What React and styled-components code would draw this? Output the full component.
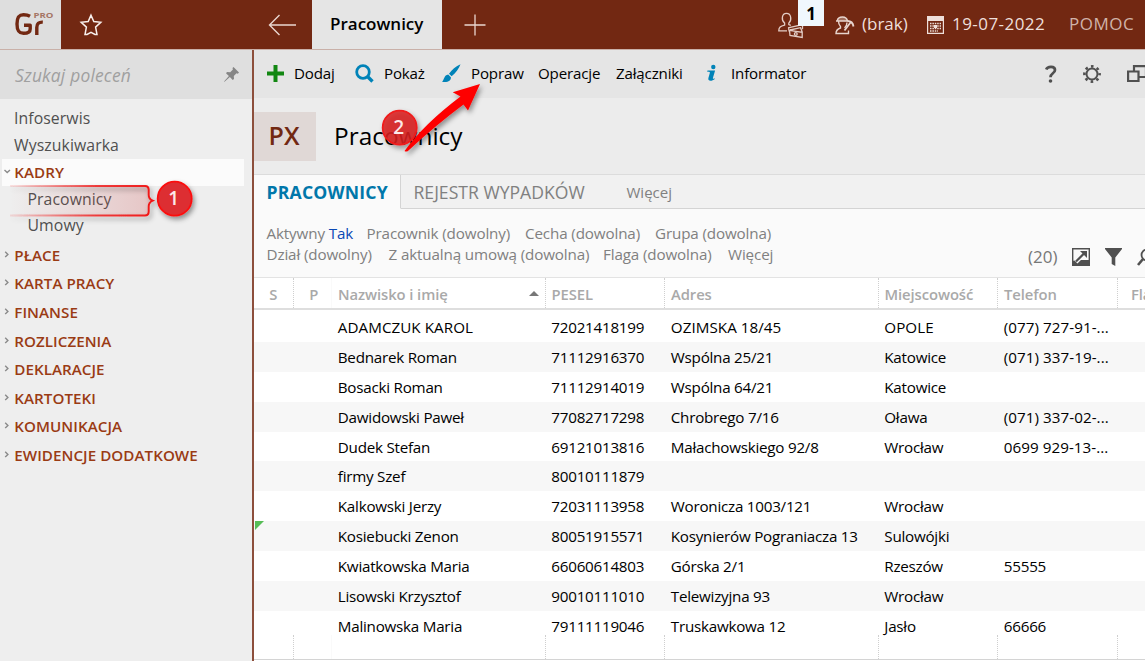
import React from "react";
import styled, { createGlobalStyle, css } from "styled-components";

const Global = createGlobalStyle`
  * { box-sizing: border-box; }
  html, body { margin: 0; padding: 0; overflow: hidden; }
  body { font-family: "Open Sans", "Noto Sans", sans-serif; font-size: 15px; color: #000; background: #fff; }
`;

const Screen = styled.div`
  position: relative;
  width: 1145px;
  height: 661px;
  overflow: hidden;
  display: flex;
  flex-direction: column;
  white-space: nowrap;
`;

/* Title bar */
const TopBar = styled.header`
  flex: none;
  height: 50px;
  display: flex;
  background: #722812;
  border-bottom: 1px solid #c9b0a8;
`;
const Brand = styled.div`
  flex: none;
  width: 61px;
  background: #dedede;
`;
const TopButton = styled.div`
  flex: none;
  width: ${(p) => p.$w}px;
  height: 49px;
  display: flex;
  align-items: center;
  justify-content: center;
`;
const Gap = styled.div`
  flex: none;
  width: ${(p) => p.$w}px;
`;
const OpenTab = styled.div`
  flex: none;
  width: 130px;
  background: #e5e5e5;
  font-size: 17px;
  font-weight: 600;
  line-height: 47px;
  padding-left: 18px;
`;
const Status = styled.div`
  flex: none;
  position: relative;
  display: flex;
  align-items: center;
  width: ${(p) => p.$w}px;
  height: 49px;
`;
const StatusText = styled.span`
  font-size: 17px;
  line-height: 47px;
  height: 49px;
  color: ${(p) => p.$color || "#eedfda"};
  letter-spacing: ${(p) => p.$ls || 0}px;
  margin-left: ${(p) => p.$ml || 0}px;
`;
const Counter = styled.div`
  position: absolute;
  left: 20px;
  top: 0;
  width: 26px;
  height: 26px;
  background: #f0f7fd;
  color: #000;
  font-size: 17px;
  font-weight: 700;
  line-height: 27px;
  text-align: center;
`;

const Body = styled.div`
  flex: 1;
  min-height: 0;
  display: flex;
`;

/* Side menu */
const Sidebar = styled.aside`
  flex: none;
  width: 254px;
  background: #eee;
  border-right: 2px solid #8d4f3c;
`;
const Search = styled.div`
  height: 49px;
  background: #dfdfdf;
  display: flex;
  align-items: center;
  justify-content: space-between;
  padding: 0 12px 0 15px;
  font-size: 17.4px;
  font-style: italic;
  color: #a0a0a0;
  letter-spacing: 0.2px;
`;
const Menu = styled.nav`
  padding-top: 5.5px;
`;
const MenuLink = styled.div`
  height: ${(p) => (p.$sub ? 26.5 : 27)}px;
  line-height: ${(p) => (p.$sub ? 26.5 : 27)}px;
  padding-left: ${(p) => (p.$sub ? 27.5 : 14)}px;
  font-size: 15.8px;
  color: #505050;
  letter-spacing: 0.08px;
`;
const Group = styled.div`
  display: flex;
  align-items: center;
  height: ${(p) => (p.$open ? 27 : 28.6)}px;
  font-size: 15.2px;
  font-weight: 600;
  color: #9a3b14;
  letter-spacing: 0.03px;
  padding-left: 4px;
  ${(p) =>
    p.$open &&
    css`
      background: #fbfbfb;
      margin: 0 8px 0 2px;
      padding-left: 2px;
    `}
  svg { width: 7px; margin-right: 3.3px; }
`;
const Groups = styled.div`
  padding-top: 2px;
`;

/* Work area */
const Main = styled.main`
  flex: 1;
  min-width: 0;
  display: flex;
  flex-direction: column;
  background: #ececec;
`;
const Toolbar = styled.div`
  flex: none;
  height: 48px;
  background: #e5e5e5;
  display: flex;
  align-items: center;
  overflow: hidden;
`;
const Tool = styled.div`
  flex: none;
  width: ${(p) => p.$w}px;
  height: 48px;
  padding-bottom: 2px;
  display: flex;
  align-items: center;
  font-size: 15.1px;
  letter-spacing: -0.16px;
  > svg { position: relative; top: 1px; }
`;
const ToolIcon = styled.span`
  display: flex;
  width: ${(p) => p.$w}px;
  justify-content: flex-start;
`;
const Heading = styled.div`
  flex: none;
  height: 76px;
  padding-top: 14px;
  display: flex;
`;
const Code = styled.div`
  width: 62px;
  height: 49px;
  background: #e0d8d6;
  color: #722812;
  font-size: 25px;
  font-weight: 600;
  line-height: 47px;
  padding-right: 2px;
  text-align: center;
`;
const Title = styled.h1`
  margin: 0 0 0 18px;
  font-size: 24.4px;
  font-weight: 400;
  line-height: 47px;
`;
const Tabs = styled.div`
  flex: none;
  height: 35px;
  display: flex;
  background: #f1f1f1;
  border-top: 1px solid #dcdcdc;
`;
const Tab = styled.div`
  width: ${(p) => p.$w}px;
  padding-left: 12.5px;
  line-height: 35px;
  font-size: ${(p) => p.$size || 17.6}px;
  color: #808080;
  border-bottom: 1px solid #d4d4d4;
  ${(p) =>
    p.$active &&
    css`
      background: #fafafa;
      border-bottom-color: #fafafa;
      border-right: 1px solid #d4d4d4;
      color: #0077aa;
      font-weight: 700;
      letter-spacing: 0.2px;
    `}
`;
const Filters = styled.div`
  flex: none;
  height: 69px;
  background: #fafafa;
  display: flex;
  border-bottom: 1px solid #e3e3e3;
`;
const FilterLines = styled.div`
  flex: none;
  width: 774px;
  padding: 13.5px 0 0 12.5px;
`;
const FilterLine = styled.div`
  height: 21.5px;
  line-height: 21.5px;
  display: flex;
  font-size: 15.2px;
  letter-spacing: -0.13px;
  color: #808080;
`;
const Filter = styled.span`
  width: ${(p) => p.$w}px;
  b { font-weight: 400; color: #0a48b4; }
`;
const FilterTools = styled.div`
  flex: 1;
  min-width: 0;
  overflow: hidden;
  display: flex;
  align-items: center;
  padding-top: 27px;
  font-size: 17px;
  color: #777;
  svg { flex: none; }
`;

const columns = "39.5px 38.5px 213.5px 119.5px 213.5px 119.5px 120px 60px";
const Grid = styled.div`
  flex: 1;
  min-height: 0;
  background: #fff;
  display: flex;
  flex-direction: column;
`;
const HeadRow = styled.div`
  flex: none;
  display: grid;
  grid-template-columns: ${columns};
  height: 32px;
  border-bottom: 2px solid #dedede;
`;
const HeadCell = styled.div`
  display: flex;
  align-items: center;
  justify-content: ${(p) => (p.$center ? "center" : "space-between")};
  padding: 1px 6px 0 ${(p) => p.$pad || 6}px;
  border-right: 1px ${(p) => (p.$faint ? "solid #fafafa" : "dotted #cfcfcf")};
  font-size: 14.8px;
  font-weight: 600;
  color: #a9a9a9;
  letter-spacing: -0.08px;
`;
const Rows = styled.div`
  padding-top: 2px;
`;
const Row = styled.div`
  position: relative;
  display: grid;
  grid-template-columns: ${columns};
  height: 29.9px;
  line-height: 30px;
  background: ${(p) => (p.$alt ? "#f7f7f7" : "#fff")};
`;
const spacing = { caps: 0.05, phone: 0.05, text: -0.24 };
const Cell = styled.div`
  padding-left: 5.8px;
  font-size: 15.2px;
  letter-spacing: ${(p) => spacing[p.$kind || "text"]}px;
`;
const Flag = styled.div`
  position: absolute;
  left: 1px;
  top: 0;
  border-top: 9px solid #57bd57;
  border-right: 9px solid transparent;
`;
const EmptyRow = styled.div`
  flex: none;
  display: grid;
  grid-template-columns: ${columns};
  height: 25px;
  margin-top: -6px;
  position: relative;
  border-bottom: 1px solid #d4d4d4;
`;
const EmptyCell = styled.div`
  border-right: 1px ${(p) => (p.$faint ? "solid #fafafa" : "dotted #cfcfcf")};
`;

/* Tutorial markers over the window */
const Markers = styled.svg`
  position: absolute;
  left: 0;
  top: 0;
  pointer-events: none;
`;

const Chevron = ({ open }) => (
  <svg width="7" height="8" viewBox="0 0 7 8" fill="none" stroke="#8a8a8a" strokeWidth="1.4">
    <path d={open ? "M.5 2l2.700 2.600L6 2" : "M1.200 .8L3.900 3.400 1.200 6"} />
  </svg>
);

const groups = ["PŁACE", "KARTA PRACY", "FINANSE", "ROZLICZENIA", "DEKLARACJE", "KARTOTEKI", "KOMUNIKACJA", "EWIDENCJE DODATKOWE"];

const people = [
  ["ADAMCZUK KAROL", "72021418199", "OZIMSKA 18/45", "OPOLE", "(077) 727-91-..."],
  ["Bednarek Roman", "71112916370", "Wspólna 25/21", "Katowice", "(071) 337-19-..."],
  ["Bosacki Roman", "71112914019", "Wspólna 64/21", "Katowice", ""],
  ["Dawidowski Paweł", "77082717298", "Chrobrego 7/16", "Oława", "(071) 337-02-..."],
  ["Dudek Stefan", "69121013816", "Małachowskiego 92/8", "Wrocław", "0699 929-13-..."],
  ["firmy Szef", "80010111879", "", "", ""],
  ["Kalkowski Jerzy", "72031113958", "Woronicza 1003/121", "Wrocław", ""],
  ["Kosiebucki Zenon", "80051915571", "Kosynierów Pograniacza 13", "Sulowójki", ""],
  ["Kwiatkowska Maria", "66060614803", "Górska 2/1", "Rzeszów", "55555"],
  ["Lisowski Krzysztof", "90010111010", "Telewizyjna 93", "Wrocław", ""],
  ["Malinowska Maria", "79111119046", "Truskawkowa 12", "Jasło", "66666"],
];

const kindOf = (text, column) => {
  if (column === 4) return text.includes("-") ? "phone" : "text";
  return column !== 1 && text === text.toUpperCase() ? "caps" : "text";
};

const Logo = () => (
  <svg width="61" height="49" viewBox="0 0 61 49">
    <g fill="none" stroke="#722812" strokeWidth="3.400" strokeLinejoin="round">
      <path d="M30 16.200C28 15 26 14.700 23.500 14.700c-4.500 0-6.500 2.600-6.500 9.300s2 9.300 6.500 9.300c3.800 0 6.700-1.300 6.700-4.300V25.300h-6.200" />
      <path d="M36.800 35V27.500c0-4 2-5.600 6-5.400" />
    </g>
    <text x="33.500" y="17.500" fontSize="7.800" fontWeight="700" fill="#a57565" textLength="20" lengthAdjust="spacingAndGlyphs">PRO</text>
  </svg>
);

export default function App() {
  return (
    <Screen>
      <Global />
      <TopBar>
        <Brand><Logo /></Brand>
        <TopButton $w={60}>
          <svg width="24" height="24" viewBox="0 0 24 24" fill="none" stroke="#f8f0ed" strokeWidth="1.500">
            <path d="M12 2.200l2.800 6.400 7 .7-5.200 4.800 1.400 7.400h-2l-4-2.200-4 2.200H6l1.400-7.400L2.200 9.300l7-.7z" />
          </svg>
        </TopButton>
        <Gap $w={130} />
        <TopButton $w={61}>
          <svg width="28" height="22" viewBox="0 0 28 22" fill="none" stroke="#ead6cf" strokeWidth="1.400">
            <path d="M28 11H1.500M11.500 1L1.500 11 11.500 21" />
          </svg>
        </TopButton>
        <OpenTab>Pracownicy</OpenTab>
        <TopButton $w={65}>
          <svg width="22" height="22" viewBox="0 0 22 22" stroke="#ead6cf" strokeWidth="1.300">
            <path d="M11 .5v21M.5 11h21" />
          </svg>
        </TopButton>
        <Gap $w={271} />
        <Status $w={57}>
          <svg width="26" height="28" viewBox="0 0 26 28" fill="none" stroke="#e3cdc6" strokeWidth="1.300">
            <path d="M9 19.800H.8c0-3.600 1.600-4.700 5.800-5.700v-2C3 9 3.700 2.300 8.500 2.300S14 9 10.800 12.100v1.400l2 .9" />
            <path d="M10 16.800l14.500-3.300v4.700M10.500 17l.8 3.500M11.500 19.300l12.700 2v5.200l-12.200-2zM12 19l10.500-2.300 1.700 4" />
            <circle cx="17.800" cy="23" r="1.400" />
          </svg>
          <Counter>1</Counter>
        </Status>
        <Status $w={92}>
          <svg width="20" height="20" viewBox="0 0 20 20" fill="none" stroke="#e8d5ce" strokeWidth="1.400">
            <path d="M11.500 18.500H1c0-3.500 1.500-4.500 4.500-5.500v-1.500C4 10 3.500 8 3.500 6M9.500 13c2-1.500 2.500-3.500 2.500-5.500M13.500 15.500v3h-2" />
            <path d="M1 6h11.500C12 3.500 10.500 2 7.500 2S2.500 3.500 2.200 6z" fill="#e8d5ce" fillOpacity=".4" />
            <path d="M9.500 15.500l6-8M12.500 6c3 0 5.500 2 6 5.500" strokeWidth="1.800" />
          </svg>
          <StatusText $ml={7}>(brak)</StatusText>
        </Status>
        <Status $w={142}>
          <svg width="17" height="18" viewBox="0 0 17 18">
            <path d="M0 0h17v5H0z" fill="#eedfda" />
            <path d="M.6 5v12.400h15.800V5" fill="none" stroke="#eedfda" strokeWidth="1.200" />
            <path d="M3 7.500h11M3 10h11M3 12.500h11M3 15h8" stroke="#eedfda" strokeWidth="1.400" strokeDasharray="1.500 .9" />
            <path d="M7 9h3v3H7z" fill="#eedfda" />
          </svg>
          <StatusText $ml={8} $ls={0.45}>19-07-2022</StatusText>
        </Status>
        <Status $w={76}>
          <StatusText $color="#d0b3a9" $ls={0.5}>POMOC</StatusText>
        </Status>
      </TopBar>
      <Body>
        <Sidebar>
          <Search>
            Szukaj poleceń
            <svg width="17" height="17" viewBox="0 0 17 17" fill="#858585">
              <path d="M10.500 1L16 6.500 14.800 7.700 13.500 7.300 10.800 10 11 13 9.700 14 6.900 11.100 1.500 15.800 1 15.500 5.900 10.100 3 7.300 4 6.100 7.200 6.300 9.900 3.500 9.500 2.100z" />
            </svg>
          </Search>
          <Menu>
            <MenuLink>Infoserwis</MenuLink>
            <MenuLink>Wyszukiwarka</MenuLink>
            <Group $open><Chevron open />KADRY</Group>
            <MenuLink $sub>Pracownicy</MenuLink>
            <MenuLink $sub>Umowy</MenuLink>
            <Groups>
              {groups.map((g) => <Group key={g}><Chevron />{g}</Group>)}
            </Groups>
          </Menu>
        </Sidebar>
        <Main>
          <Toolbar>
            <Gap $w={13} />
            <Tool $w={88}>
              <ToolIcon $w={27}><svg width="17" height="17" viewBox="0 0 17 17"><path d="M0 8.500h17M8.500 0v17" stroke="#128712" strokeWidth="4" /></svg></ToolIcon>Dodaj
            </Tool>
            <Tool $w={87}>
              <ToolIcon $w={29}><svg width="19" height="19" viewBox="0 0 19 19" fill="none" stroke="#0083b8"><circle cx="8" cy="8" r="6.300" strokeWidth="2.800" /><path d="M12.500 12.500l5 5" strokeWidth="3.400" /></svg></ToolIcon>Pokaż
            </Tool>
            <Tool $w={96}>
              <ToolIcon $w={29}><svg width="19" height="19" viewBox="0 0 19 19" fill="#0083b8"><path d="M18.500.2C14 2 9.500 5.800 7 9.800l2.600 2.500C13.500 9.200 17 4.500 18.500.2zM6.200 10.600l2.700 2.600c.3 3.300-3 5.600-8.900 4.600 2.200-1.700 2-6.700 6.200-7.200z" /></svg></ToolIcon>Popraw
            </Tool>
            <Tool $w={78}>Operacje</Tool>
            <Tool $w={90}>Załączniki</Tool>
            <Tool $w={338}>
              <ToolIcon $w={25}><svg width="12" height="18" viewBox="0 0 12 18" fill="#0083b8"><circle cx="7.300" cy="3" r="2.200" /><path d="M1.500 6.500h7.600L6.900 14c-.2.900.4 1 1.600.2l.3.800c-3 2.600-7.300 2.400-6.400-.9l1.500-5.300c.2-.8-.5-1.200-2.700-1.100z" /></svg></ToolIcon>Informator
            </Tool>
            <Tool $w={39}><svg width="14" height="19" viewBox="0 0 14 19"><path d="M2.200 4.500C3.500 1 11 .8 11 5c0 3.500-4.500 3-4.500 7.200" fill="none" stroke="#505050" strokeWidth="2.700" /><circle cx="6.500" cy="16" r="1.800" fill="#505050" /></svg></Tool>
            <Tool $w={44}>
              <svg width="18" height="18" viewBox="0 0 18 18" fill="none" stroke="#505050"><circle cx="9" cy="9" r="5.500" strokeWidth="2" /><circle cx="9" cy="9" r="7.600" strokeWidth="2.600" strokeDasharray="2.600 3.369" strokeDashoffset="1.300" /></svg>
            </Tool>
            <Tool $w={20}>
              <svg width="20" height="18" viewBox="0 0 20 18" fill="none" stroke="#505050" strokeWidth="2.200"><path d="M1.100 6.500h10.400v9.500H1.100zM7 6V1.100h12v10.900h-7" /></svg>
            </Tool>
          </Toolbar>
          <Heading>
            <Code>PX</Code>
            <Title>Pracownicy</Title>
          </Heading>
          <Tabs>
            <Tab $active $w={147}>PRACOWNICY</Tab>
            <Tab $w={213}>REJESTR WYPADKÓW</Tab>
            <Tab $w={531} $size={15}>Więcej</Tab>
          </Tabs>
          <Filters>
            <FilterLines>
              <FilterLine>
                <Filter $w={100}>Aktywny <b>Tak</b></Filter>
                <Filter $w={158.5}>Pracownik (dowolny)</Filter>
                <Filter $w={130}>Cecha (dowolna)</Filter>
                <Filter>Grupa (dowolna)</Filter>
              </FilterLine>
              <FilterLine>
                <Filter $w={122}>Dział (dowolny)</Filter>
                <Filter $w={214.5}>Z aktualną umową (dowolna)</Filter>
                <Filter $w={125}>Flaga (dowolna)</Filter>
                <Filter>Więcej</Filter>
              </FilterLine>
            </FilterLines>
            <FilterTools>
              <Gap $w={44}>(20)</Gap>
              <svg width="18" height="18" viewBox="0 0 18 18"><path d="M.7.700h16.600v16.600H.7z" fill="#fafafa" stroke="#505050" strokeWidth="1.400" /><path d="M0 13l6-1 3 0h9v6H0z" fill="#505050" /><path d="M4 14l9-9" stroke="#fafafa" strokeWidth="4" /><path d="M4 13.500L13 4.500" stroke="#505050" strokeWidth="2.200" /><path d="M8 3h7v7z" fill="#505050" /></svg>
              <Gap $w={15} />
              <svg width="17" height="18" viewBox="0 0 17 18"><path d="M0 0h17v1L10.300 9.500V18L6.700 16V9.500L0 1z" fill="#505050" /></svg>
              <Gap $w={15} />
              <svg width="18" height="18" viewBox="0 0 18 18" fill="none" stroke="#505050"><circle cx="10" cy="7" r="5.500" strokeWidth="1.800" /><path d="M6 11l-5 6" strokeWidth="2.600" /></svg>
            </FilterTools>
          </Filters>
          <Grid>
            <HeadRow>
              <HeadCell $center>S</HeadCell>
              <HeadCell $center $faint $pad={9}>P</HeadCell>
              <HeadCell>Nazwisko i imię<svg width="10" height="5" viewBox="0 0 10 5"><path d="M0 5l5-5 5 5z" fill="#777" /></svg></HeadCell>
              <HeadCell>PESEL</HeadCell>
              <HeadCell>Adres</HeadCell>
              <HeadCell>Miejscowość</HeadCell>
              <HeadCell>Telefon</HeadCell>
              <HeadCell $pad={13}>Flaga</HeadCell>
            </HeadRow>
            <Rows>
              {people.map((r, i) => (
                <Row key={r[1]} $alt={i % 2 === 1}>
                  <Cell />
                  <Cell>{i === 7 && <Flag />}</Cell>
                  {r.map((c, j) => <Cell key={j} $kind={kindOf(c, j)}>{c}</Cell>)}
                </Row>
              ))}
            </Rows>
            <EmptyRow>
              {[0, 1, 2, 3, 4, 5, 6].map((i) => <EmptyCell key={i} $faint={i === 1} />)}
            </EmptyRow>
          </Grid>
        </Main>
      </Body>
      <Markers width="1145" height="661" viewBox="0 0 1145 661">
        <defs>
          <linearGradient id="fill" x1="0" x2="1"><stop offset="0" stopColor="#c44" stopOpacity="0" /><stop offset="1" stopColor="#c44" stopOpacity=".24" /></linearGradient>
          <linearGradient id="edge" gradientUnits="userSpaceOnUse" x1="10" y1="0" x2="152" y2="0"><stop offset="0" stopColor="#e22" stopOpacity=".1" /><stop offset=".6" stopColor="#e22" stopOpacity=".85" /><stop offset="1" stopColor="#f01818" /></linearGradient>
          <filter id="shade" x="-30%" y="-30%" width="160%" height="170%"><feDropShadow dx="2" dy="3" stdDeviation="2.500" floodOpacity=".4" /></filter>
        </defs>
        <path d="M10 186H145q3.700 0 3.700 4v5q0 4 4 5.700q-4 1.700-4 5.700v5q0 4-3.700 4H10z" fill="url(#fill)" />
        <path d="M10 186H145q3.700 0 3.700 4v5q0 4 4 5.700q-4 1.700-4 5.700v5q0 4-3.700 4H10" fill="none" stroke="url(#edge)" strokeWidth="2" filter="url(#shade)" />
        <circle cx="174.700" cy="198.700" r="17" fill="#dd2d32" stroke="#fb1010" strokeWidth="1.800" filter="url(#shade)" />
        <circle cx="399.700" cy="127.700" r="17" fill="#d91e22" fillOpacity=".86" stroke="#f01a1a" strokeWidth="1.800" filter="url(#shade)" />
        <path d="M480 84L452.700 92.300 460.500 96.500Q424 124 404.500 151Q407 152.500 409 150Q436 125 463.500 104.500L468 110.500z" fill="#fe0000" filter="url(#shade)" />
        <g fill="#fce8e8" fontSize="19" fontWeight="600" textAnchor="middle">
          <text x="173.700" y="205">1</text>
          <text x="398.700" y="134">2</text>
        </g>
      </Markers>
    </Screen>
  );
}
